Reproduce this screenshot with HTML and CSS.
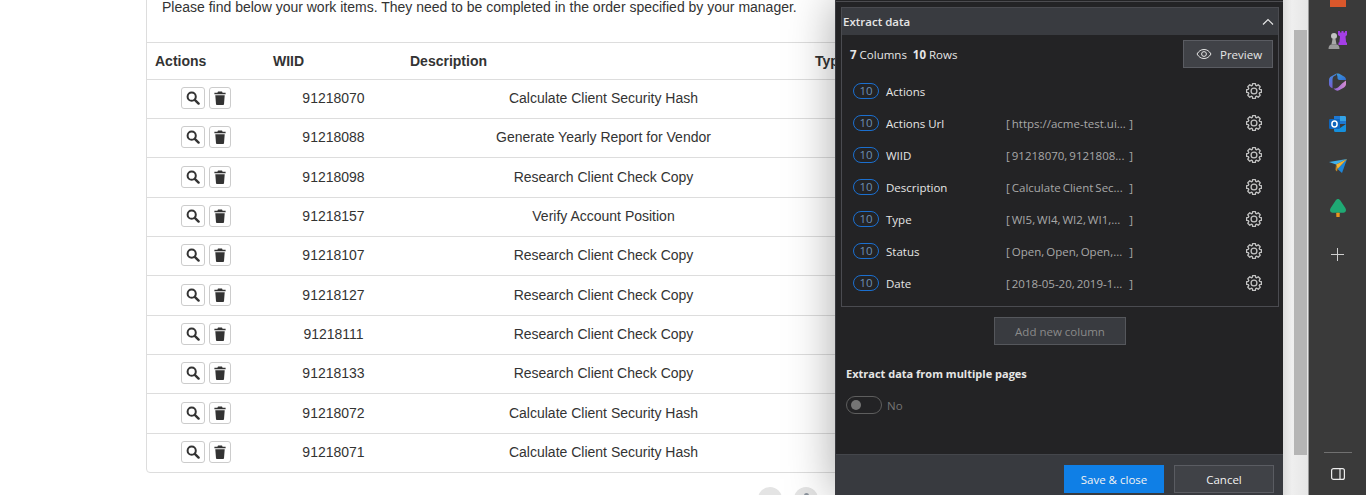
FILE: index.html
```html
<!DOCTYPE html>
<html>
	<head>
		<meta charset="utf-8">
		<title>Work items</title>
		<link rel="stylesheet" href="styles.css">
	</head>
	<body>
		<svg class="defs" width="0" height="0">
			<symbol id="i-search" viewBox="0 0 14 14">
				<circle cx="5.7" cy="5.7" r="4.1" fill="none" stroke="currentColor" stroke-width="2"/>
				<path d="M8.8 8.8l3.8 3.8" stroke="currentColor" stroke-width="2.4" stroke-linecap="round"/>
			</symbol>
			<symbol id="i-trash" viewBox="0 0 12 14">
				<path d="M4 0.5h4l.6 1.2h3v1.6H.4V1.7h3zM1.3 4.2h9.4l-.7 9a.9.9 0 0 1-.9.8H2.9a.9.9 0 0 1-.9-.8z" fill="currentColor"/>
			</symbol>
			<symbol id="i-gear" viewBox="-12 -12 24 24">
				<polygon points="-2.28,-7.46 -1.9,-9.82 1.9,-9.82 2.28,-7.46 3.66,-6.89 5.6,-8.29 8.29,-5.6 6.89,-3.66 7.46,-2.28 9.82,-1.9 9.82,1.9 7.46,2.28 6.89,3.66 8.29,5.6 5.6,8.29 3.66,6.89 2.28,7.46 1.9,9.82 -1.9,9.82 -2.28,7.46 -3.66,6.89 -5.6,8.29 -8.29,5.6 -6.89,3.66 -7.46,2.28 -9.82,1.9 -9.82,-1.9 -7.46,-2.28 -6.89,-3.66 -8.29,-5.6 -5.6,-8.29 -3.66,-6.89" fill="none" stroke="currentColor" stroke-width="1.7" stroke-linejoin="round"/>
				<circle r="3.9" fill="none" stroke="currentColor" stroke-width="1.7"/>
			</symbol>
		</svg>

		<div class="viewport">
			<div class="page">
				<p class="intro">Please find below your work items. They need to be completed in the order specified by your manager.</p>

				<div class="card">
					<div class="row head">
						<div>Actions</div>
						<div>WIID</div>
						<div>Description</div>
						<div>Type</div>
					</div>
					<div class="row">
						<div class="acts"><button class="btn btn-s"><svg><use href="#i-search"/></svg></button><button class="btn btn-t"><svg><use href="#i-trash"/></svg></button></div>
						<div class="c">91218070</div>
						<div class="c">Calculate Client Security Hash</div>
					</div>
					<div class="row">
						<div class="acts"><button class="btn btn-s"><svg><use href="#i-search"/></svg></button><button class="btn btn-t"><svg><use href="#i-trash"/></svg></button></div>
						<div class="c">91218088</div>
						<div class="c">Generate Yearly Report for Vendor</div>
					</div>
					<div class="row">
						<div class="acts"><button class="btn btn-s"><svg><use href="#i-search"/></svg></button><button class="btn btn-t"><svg><use href="#i-trash"/></svg></button></div>
						<div class="c">91218098</div>
						<div class="c">Research Client Check Copy</div>
					</div>
					<div class="row">
						<div class="acts"><button class="btn btn-s"><svg><use href="#i-search"/></svg></button><button class="btn btn-t"><svg><use href="#i-trash"/></svg></button></div>
						<div class="c">91218157</div>
						<div class="c">Verify Account Position</div>
					</div>
					<div class="row">
						<div class="acts"><button class="btn btn-s"><svg><use href="#i-search"/></svg></button><button class="btn btn-t"><svg><use href="#i-trash"/></svg></button></div>
						<div class="c">91218107</div>
						<div class="c">Research Client Check Copy</div>
					</div>
					<div class="row">
						<div class="acts"><button class="btn btn-s"><svg><use href="#i-search"/></svg></button><button class="btn btn-t"><svg><use href="#i-trash"/></svg></button></div>
						<div class="c">91218127</div>
						<div class="c">Research Client Check Copy</div>
					</div>
					<div class="row">
						<div class="acts"><button class="btn btn-s"><svg><use href="#i-search"/></svg></button><button class="btn btn-t"><svg><use href="#i-trash"/></svg></button></div>
						<div class="c">91218111</div>
						<div class="c">Research Client Check Copy</div>
					</div>
					<div class="row">
						<div class="acts"><button class="btn btn-s"><svg><use href="#i-search"/></svg></button><button class="btn btn-t"><svg><use href="#i-trash"/></svg></button></div>
						<div class="c">91218133</div>
						<div class="c">Research Client Check Copy</div>
					</div>
					<div class="row">
						<div class="acts"><button class="btn btn-s"><svg><use href="#i-search"/></svg></button><button class="btn btn-t"><svg><use href="#i-trash"/></svg></button></div>
						<div class="c">91218072</div>
						<div class="c">Calculate Client Security Hash</div>
					</div>
					<div class="row last">
						<div class="acts"><button class="btn btn-s"><svg><use href="#i-search"/></svg></button><button class="btn btn-t"><svg><use href="#i-trash"/></svg></button></div>
						<div class="c">91218071</div>
						<div class="c">Calculate Client Security Hash</div>
					</div>
				</div>

				<div class="pager">
					<span class="dot"></span>
					<span class="dot"><i class="dot-mark"></i></span>
				</div>

				<aside class="panel">
					<div class="panel-top"></div>
					<div class="panel-body">
						<section class="extract">
							<div class="extract-head">
								<span>Extract data</span>
								<svg class="chev" width="12" height="8" viewBox="0 0 12 8"><path d="M1 6.500l5-5 5 5" fill="none" stroke="currentColor" stroke-width="1.200"/></svg>
							</div>
							<div class="summary">
								<div><b>7</b> Columns &nbsp;<b>10</b> Rows</div>
								<button class="preview">
									<svg width="16" height="12" viewBox="0 0 16 12"><path d="M1 6c1.800-3 4-4.500 7-4.500S13.200 3 15 6c-1.800 3-4 4.500-7 4.500S2.800 9 1 6z" fill="none" stroke="currentColor"/><circle cx="8" cy="6" r="2.400" fill="none" stroke="currentColor"/></svg>
									Preview
								</button>
							</div>
							<div class="col-row"><span class="pill">10</span><span class="col-name">Actions</span><span class="col-val"></span><svg class="gear"><use href="#i-gear"/></svg></div>
							<div class="col-row"><span class="pill">10</span><span class="col-name">Actions Url</span><span class="col-val"><span>[ https://acme-test.ui...</span><span>]</span></span><svg class="gear"><use href="#i-gear"/></svg></div>
							<div class="col-row"><span class="pill">10</span><span class="col-name">WIID</span><span class="col-val"><span>[ 91218070, 9121808...</span><span>]</span></span><svg class="gear"><use href="#i-gear"/></svg></div>
							<div class="col-row"><span class="pill">10</span><span class="col-name">Description</span><span class="col-val"><span>[ Calculate Client Sec...</span><span>]</span></span><svg class="gear"><use href="#i-gear"/></svg></div>
							<div class="col-row"><span class="pill">10</span><span class="col-name">Type</span><span class="col-val"><span>[ WI5, WI4, WI2, WI1,...</span><span>]</span></span><svg class="gear"><use href="#i-gear"/></svg></div>
							<div class="col-row"><span class="pill">10</span><span class="col-name">Status</span><span class="col-val"><span>[ Open, Open, Open,...</span><span>]</span></span><svg class="gear"><use href="#i-gear"/></svg></div>
							<div class="col-row"><span class="pill">10</span><span class="col-name">Date</span><span class="col-val"><span>[ 2018-05-20, 2019-1...</span><span>]</span></span><svg class="gear"><use href="#i-gear"/></svg></div>
						</section>

						<div class="add-wrap"><button class="add">Add new column</button></div>

						<div class="multi">
							<div class="multi-title">Extract data from multiple pages</div>
							<div class="toggle-row"><span class="toggle"><i></i></span><span>No</span></div>
						</div>
					</div>
					<div class="panel-foot">
						<button class="save">Save &amp; close</button>
						<button class="cancel">Cancel</button>
					</div>
				</aside>
			</div>

			<div class="scroll"><div class="thumb"></div></div>

			<nav class="edge">
				<div class="edge-apps">
					<div class="app">
						<svg width="16" height="18" viewBox="0 0 16 18"><path d="M2 0h12a2 2 0 0 1 2 2v16H0V2a2 2 0 0 1 2-2z" fill="#d9572b"/></svg>
					</div>
					<div class="app">
						<svg width="19" height="18" viewBox="0 0 19 18">
							<path d="M10 0h2v1.500h1.500V0h2v1.500H17V0h2v4l-1.500 1.500.6 6h.9V14h-8.500v-2.500h.9l.6-6L10 4z" fill="#a43ee6"/>
							<circle cx="6" cy="5" r="3" fill="#c2c2c2"/>
							<path d="M4.500 8h3l1 5.500h-5z" fill="#a8a8a8"/>
							<path d="M0.500 18c0-2.500 1-4 2.500-4.500h6c1.500.5 2.500 2 2.500 4.500z" fill="#9a9a9a"/>
						</svg>
					</div>
					<div class="app">
						<svg width="17" height="18" viewBox="0 0 17 18">
							<defs>
								<linearGradient id="cp1" x1="0" y1="0" x2="0" y2="1"><stop offset="0" stop-color="#3d8be0"/><stop offset="1" stop-color="#7a5ccf"/></linearGradient>
								<linearGradient id="cp2" x1="0" y1="0" x2="1" y2="1"><stop offset="0" stop-color="#3f9bd8"/><stop offset="1" stop-color="#2f6fd6"/></linearGradient>
								<linearGradient id="cp3" x1="0" y1="0" x2="1" y2="0"><stop offset="0" stop-color="#8b62d8"/><stop offset="1" stop-color="#d48bd0"/></linearGradient>
							</defs>
							<path d="M7 .8L2 3.600C.8 4.300 0 5.500 0 7v4c0 1.500.8 2.700 2 3.400l1.500.8V6.500C3.500 4 5 2.500 7 2.300z" fill="url(#cp1)"/>
							<path d="M7 .8c1.200-.6 2.300-.5 3.300 0l4.700 2.800c1 .6 2 1.900 2 3.400H10.500C9.500 7 8.500 6.200 8.500 5 8.500 3.500 8.500 2 7 .8z" fill="url(#cp2)"/>
							<path d="M17 7.500V11c0 1.500-.8 2.700-2 3.400l-5 2.800c-1 .6-2.200.6-3.200 0-.8-.4-1.500-1-2.300-1.700 2 .3 4-.3 5.500-2l2.500-2.500c1.500-1.500 3-2.300 4.500-3.500z" fill="url(#cp3)"/>
						</svg>
					</div>
					<div class="app">
						<svg width="17" height="16" viewBox="0 0 17 16">
							<path d="M5 0h10.500A1.500 1.500 0 0 1 17 1.500V8H5z" fill="#1e78d2"/>
							<path d="M11 0h4.500A1.500 1.500 0 0 1 17 1.500V5h-6z" fill="#34a3e6"/>
							<path d="M5 8l6 4 6-4v6.500a1.500 1.500 0 0 1-1.500 1.500h-9A1.500 1.500 0 0 1 5 14.500z" fill="#1590dd"/>
							<rect x="0" y="3" width="11" height="10" rx="1.200" fill="#0d65bd"/>
							<ellipse cx="5.500" cy="8" rx="2.600" ry="3" fill="none" stroke="#fff" stroke-width="1.500"/>
						</svg>
					</div>
					<div class="app">
						<svg width="18" height="14" viewBox="0 0 18 14">
							<path d="M0 3l18-3-11 5.500z" fill="#3fb0ea"/>
							<path d="M18 0L13 14 8.500 10z" fill="#1f86d8"/>
							<path d="M18 0L7 5.500 8 8l.5 2z" fill="#f2b636"/>
							<path d="M7 5.500l1.500 4.500-.5 2.500-1.500-1.500z" fill="#c98a22"/>
						</svg>
					</div>
					<div class="app">
						<svg width="16" height="18" viewBox="0 0 16 18">
							<path d="M8 0c1 0 1.700.6 2.200 1.300l5 7.500c.7 1.100.9 2 .7 3-.2 1-1.100 1.900-2.400 1.900H2.500C1.200 13.700.3 12.800.1 11.800c-.2-1 0-1.900.7-3l5-7.500C6.300.6 7 0 8 0z" fill="#1fa974"/>
							<rect x="6.300" y="13.700" width="3.400" height="4.300" rx=".6" fill="#e8961e"/>
						</svg>
					</div>
					<div class="app">
						<svg width="13" height="13" viewBox="0 0 13 13"><path d="M6.500 0v13M0 6.500h13" stroke="#cfcfcf" stroke-width="1"/></svg>
					</div>
				</div>
				<div class="edge-sep"></div>
				<svg class="edge-pane" width="14" height="12" viewBox="0 0 14 12"><rect x=".6" y=".6" width="12.800" height="10.800" rx="2" fill="none" stroke="#ececec" stroke-width="1.200"/><path d="M9 .6v10.800" stroke="#ececec" stroke-width="1.200"/></svg>
			</nav>
		</div>
	</body>
</html>
```
FILE: styles.css
```css
*{
	margin:0;
	padding:0;
	box-sizing:border-box;
}
html,body{
	height:100%;
	overflow:hidden;
}
body{
	font-family:"Liberation Sans",Arial,sans-serif;
	font-size:14px;
	color:#333;
	background:#fff;
}
button{
	font-family:inherit;
}
.defs{
	display:block;
	height:0;
}
.viewport{
	display:flex;
	height:495px;
	overflow:hidden;
}

/* page under the panel */
.page{
	position:relative;
	flex:1;
	min-width:0;
	overflow:hidden;
	padding-left:146px;
}
.intro{
	margin:-3px 0 0 16px;
	height:45px;
	line-height:20px;
	white-space:nowrap;
}
.card{
	width:1100px;
	height:431px;
	border:1px solid #ddd;
	border-radius:0 0 4px 4px;
	position:relative;
}
.card::before{
	content:"";
	position:absolute;
	left:-1px;
	top:-50px;
	height:50px;
	border-left:1px solid #ddd;
}
.row{
	display:grid;
	grid-template-columns:118px 137px 403px 1fr;
	align-items:center;
	height:39.34px;
	padding-bottom:2px;
	border-bottom:1px solid #ddd;
}
.row.last{
	border-bottom:0;
}
.head{
	height:36.79px;
	padding-bottom:0;
	font-weight:bold;
	grid-template-columns:118px 137px 405px 1fr;
}
.head div{
	padding-left:8px;
}
.c{
	text-align:center;
}
.acts{
	display:flex;
	justify-content:center;
	gap:4px;
}
.btn{
	display:flex;
	align-items:center;
	justify-content:center;
	height:22px;
	background:#fff;
	border:1px solid #ccc;
	border-radius:3px;
	color:#333;
}
.btn-s{
	width:24px;
}
.btn-t{
	width:22px;
}
.btn-s svg{
	width:14px;
	height:14px;
}
.btn-t svg{
	width:12px;
	height:14px;
}
.pager{
	display:flex;
	gap:12px;
	margin:14px 0 0 612px;
}
.dot{
	display:flex;
	justify-content:center;
	width:24px;
	height:24px;
	padding-top:6px;
	border-radius:50%;
	background:#e4e4e4;
}
.dot-mark{
	width:5px;
	height:5px;
	border-radius:50%;
	background:#8a929c;
}

/* extract data panel */
.panel{
	position:absolute;
	top:0;
	right:0;
	bottom:0;
	width:448px;
	display:flex;
	flex-direction:column;
	background:#232325;
	border-left:1px solid #3a3b40;
	box-shadow:0 0 45px rgba(0,0,0,.35);
	font-family:"Open Sans","Noto Sans",sans-serif;
	font-size:11.500px;
	color:#e6e6e6;
}
.panel-top{
	height:2px;
	border-bottom:1px solid #4c4c50;
}
.panel-body{
	flex:1;
	padding:5px 4px 0 5px;
}
.extract{
	height:300px;
	border:1px solid #4a4b50;
}
.extract-head{
	display:flex;
	align-items:center;
	justify-content:space-between;
	height:27px;
	padding:0 4px 0 1px;
	background:#393b40;
	font-weight:600;
}
.chev{
	color:#e6e6e6;
}
.summary{
	display:flex;
	align-items:center;
	justify-content:space-between;
	height:38px;
	margin-bottom:2px;
	padding:0 5px 0 8px;
}
.summary b{
	font-weight:700;
}
.preview{
	display:flex;
	align-items:center;
	gap:8px;
	width:90px;
	height:28px;
	padding-left:12px;
	background:#404247;
	border:1px solid #5a5c62;
	color:#e6e6e6;
	font-family:inherit;
	font-size:11.500px;
}
.col-row{
	display:flex;
	align-items:center;
	height:32px;
	padding:0 15px 0 11px;
}
.pill{
	width:26px;
	height:16px;
	margin-right:7px;
	border:1px solid #1b6fcf;
	border-radius:8px;
	text-align:center;
	line-height:14px;
	font-size:11.500px;
	color:#6d8fb5;
}
.col-name{
	width:120px;
}
.col-val{
	display:flex;
	justify-content:space-between;
	width:127px;
	color:#a8a8a8;
	word-spacing:-1px;
	white-space:nowrap;
}
.gear{
	width:18px;
	height:18px;
	margin-left:auto;
	color:#c4c4c4;
}
.add-wrap{
	display:flex;
	justify-content:flex-end;
	padding:10px 153px 0 0;
}
.add{
	width:132px;
	height:28px;
	background:#393b40;
	border:1px solid #55575c;
	color:#8a8a8a;
	font-family:inherit;
	font-size:11.500px;
}
.multi{
	padding:20px 0 0 5px;
}
.multi-title{
	font-size:11px;
	font-weight:700;
	line-height:17px;
}
.toggle-row{
	display:flex;
	align-items:center;
	gap:5px;
	margin-top:14px;
	color:#757575;
}
.toggle{
	display:flex;
	align-items:center;
	width:36px;
	height:18px;
	padding-left:4px;
	border:1px solid #5e5e5e;
	border-radius:9px;
}
.toggle i{
	width:10px;
	height:10px;
	border-radius:50%;
	background:#757575;
}
.panel-foot{
	display:flex;
	justify-content:flex-end;
	gap:10px;
	height:41px;
	padding:10px 9px 0 0;
	background:#383a3f;
	border-top:1px solid #44464b;
}
.save,.cancel{
	width:100px;
	height:28px;
	font-family:inherit;
	font-size:11.500px;
	color:#f2f2f2;
}
.save{
	background:#0f7fe6;
	border:0;
}
.cancel{
	background:#404247;
	border:1px solid #5a5c62;
}

/* scrollbar next to the panel */
.scroll{
	width:26px;
	padding:30px 1px 0 11px;
	background:linear-gradient(90deg,#dcdcdc,#efefef 35%,#e6e6e6);
	border-right:1px solid #9a9a9a;
}
.thumb{
	height:425px;
	background:#b5b5b5;
}

/* browser side bar */
.edge{
	width:57px;
	display:flex;
	flex-direction:column;
	align-items:center;
	background:#3a3a3a;
	overflow:hidden;
}
.edge-apps{
	margin-top:-23px;
}
.app{
	display:flex;
	align-items:center;
	justify-content:center;
	height:42px;
}
.app:last-child{
	height:50px;
}
.edge-sep{
	width:28px;
	height:1px;
	margin-top:auto;
	background:#707070;
}
.edge-pane{
	margin:15px 0 15px;
}
```
